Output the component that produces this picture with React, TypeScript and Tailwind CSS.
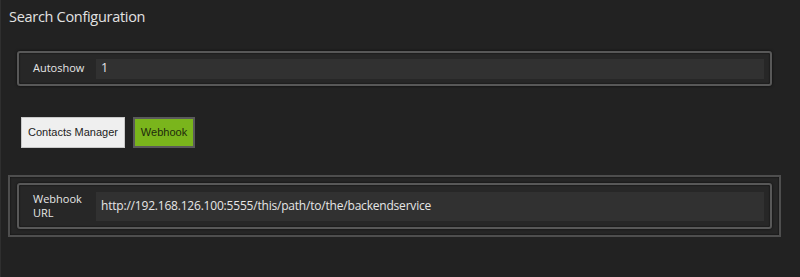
export default function App() {
    return (
        <div className="w-[800px] h-[277px] bg-[#222222] border-l border-[#2f2f2f] overflow-hidden" style={{ fontFamily: '"Open Sans", "Noto Sans", sans-serif' }}>
            {/* Title */}
            <h1 className="pl-[8px] pt-[7px] h-[51px] text-[14.5px] leading-[20px] text-[#e2e2e2] tracking-[-0.3px]">
                Search Configuration
            </h1>

            {/* Autoshow */}
            <div className="ml-[16px] w-[755px] h-[35px] flex items-center rounded-[3px] border-2 border-[#585858] bg-[#272727] shadow-[0_0_3px_rgba(0,0,0,0.7),inset_0_0_2px_rgba(0,0,0,0.8)]">
                <div className="w-[77px] pl-[14px] text-[11px] text-[#e6e6e6]">Autoshow</div>
                <div className="flex-1 mr-[6px] h-[20px] bg-[#313131] flex items-center pl-[5px] text-[12.5px] text-[#e6e6e6]">1</div>
            </div>

            {/* Tabs */}
            <div className="flex gap-[8px] pl-[20px] mt-[31px]">
                <button className="h-[31px] w-[104px] bg-[#efefef] border border-[#c9c9c9] text-[11px] text-[#222]" style={{ fontFamily: '"Liberation Sans", Arial, sans-serif' }}>
                    Contacts Manager
                </button>
                <button className="h-[31px] w-[62px] bg-[#7ab51c] border-2 border-[#5a5a5a] text-[11px] text-[#1e2a0c]" style={{ fontFamily: '"Liberation Sans", Arial, sans-serif' }}>
                    Webhook
                </button>
            </div>

            {/* Webhook section */}
            <div className="ml-[7px] mt-[27px] w-[773px] h-[62px] border-2 border-[#4e4e4e] bg-[#262626] py-[6px] pl-[7px] shadow-[inset_0_0_2px_rgba(0,0,0,0.8)]">
                <div className="w-[755px] h-[46px] flex items-center rounded-[3px] border-2 border-[#585858] bg-[#272727] shadow-[0_0_3px_rgba(0,0,0,0.7),inset_0_0_2px_rgba(0,0,0,0.8)]">
                    <div className="w-[77px] pl-[14px] text-[11px] leading-[14px] text-[#e6e6e6]">
                        Webhook
                        <br />
                        URL
                    </div>
                    <div className="flex-1 mr-[6px] h-[29px] bg-[#313131] flex items-center pl-[5px] text-[12px] tracking-[-0.2px] text-[#e6e6e6]">
                        http://192.168.126.100:5555/this/path/to/the/backendservice
                    </div>
                </div>
            </div>
        </div>
    )
}
